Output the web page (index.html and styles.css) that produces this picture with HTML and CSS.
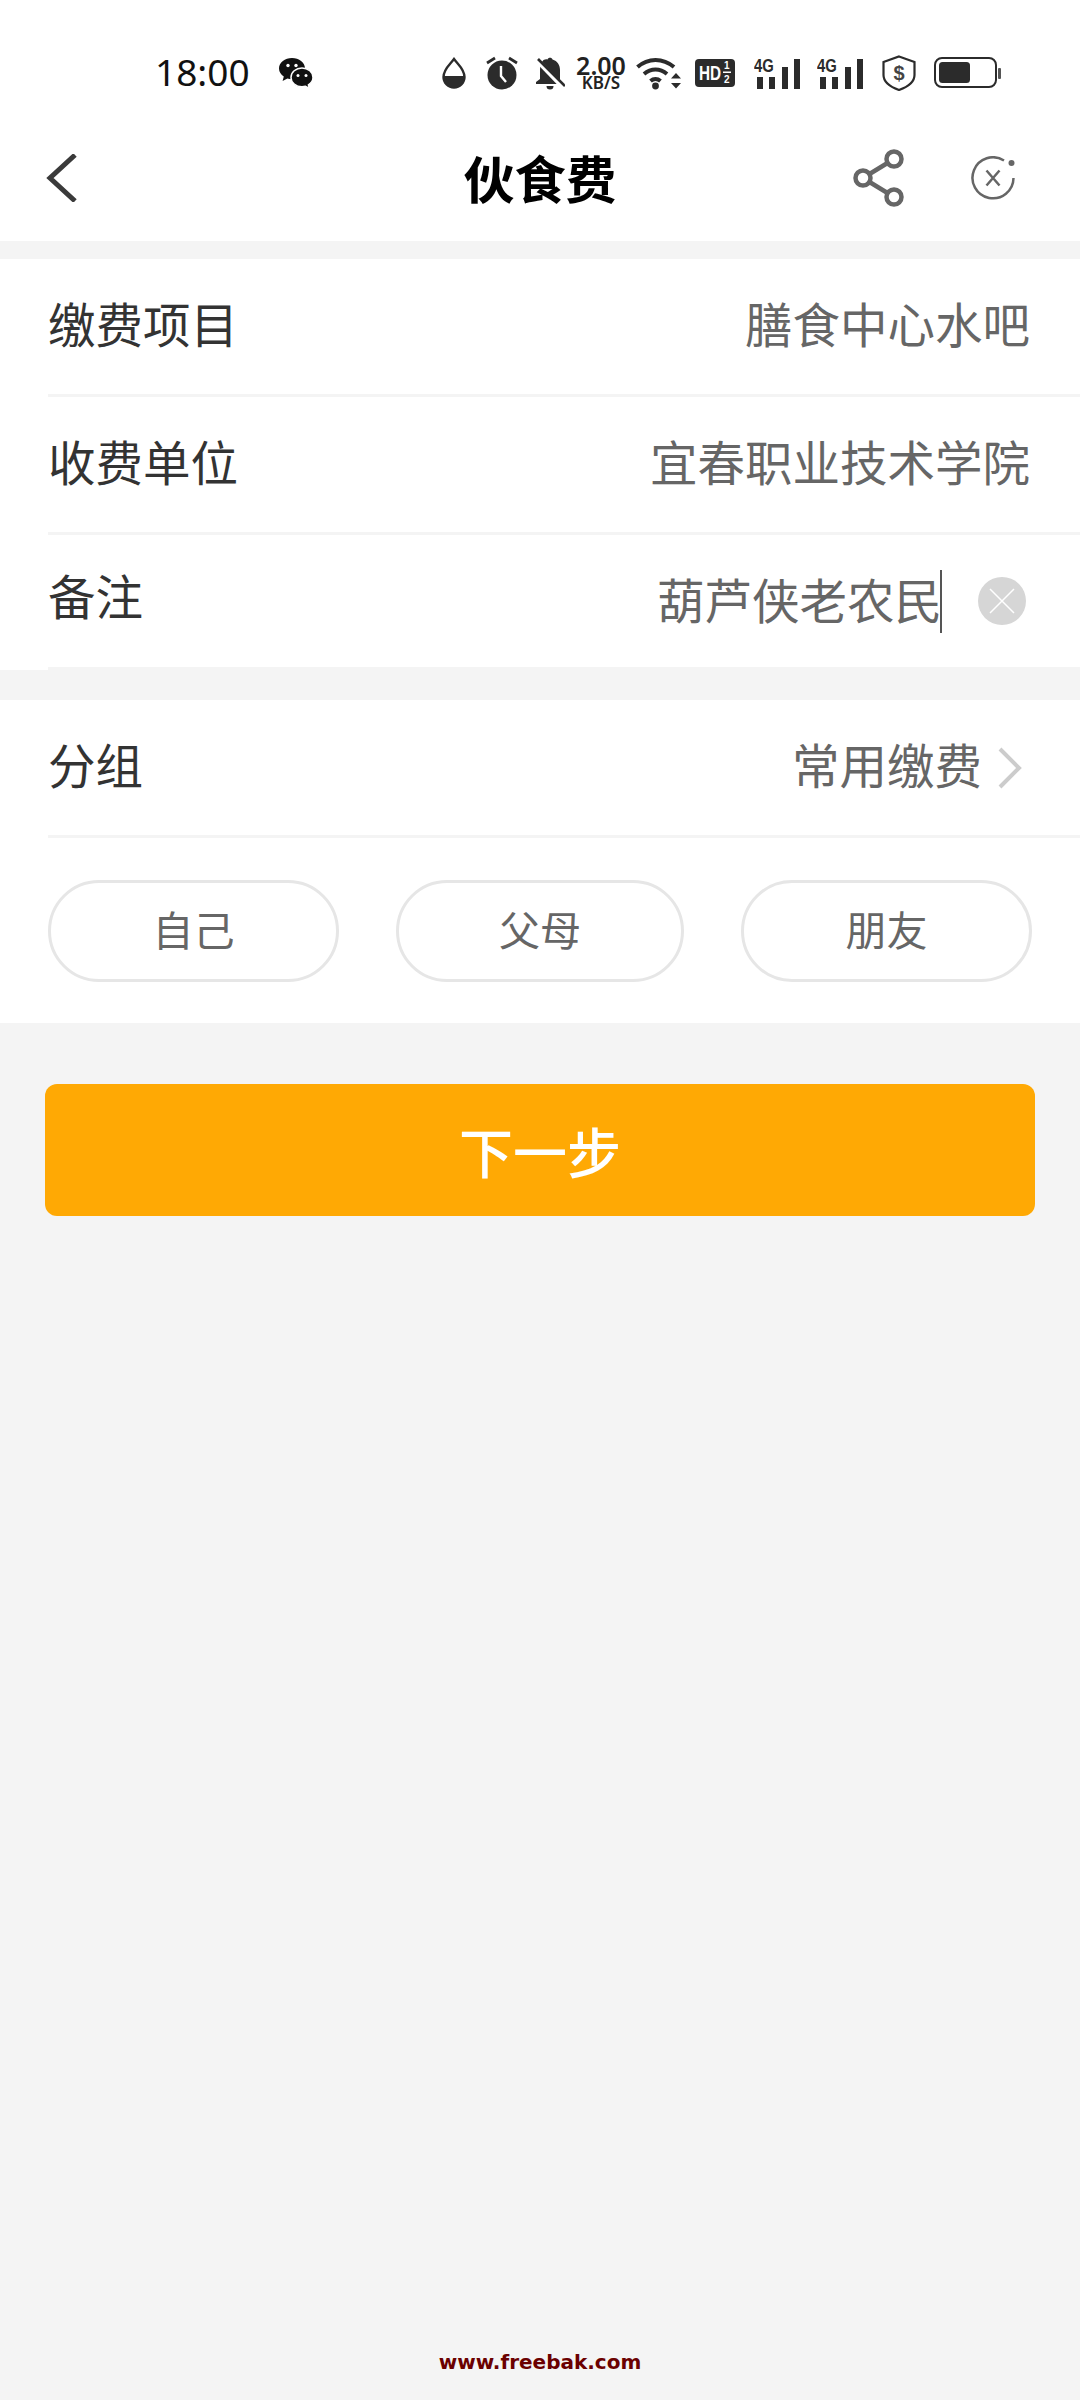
FILE: index.html
```html
<!DOCTYPE html>
<html lang="zh-CN">
<head>
    <meta charset="UTF-8">
    <meta name="viewport" content="width=device-width, initial-scale=1.0">
    <title>伙食费</title>
    <link rel="stylesheet" href="styles.css">
</head>
<body>
    <div class="page">
        <div class="status-bar">
            <span class="time">18:00</span>
            <svg class="ic-wechat" width="34" height="32" viewBox="0 0 34 32">
                <path d="M13 1C6 1 0 5.500 0 11.500c0 3.400 2 6.200 4.800 8.100L3.600 24l4.800-2.400c1.500.4 3 .6 4.600.6 7 0 13-4.800 13-10.700S20 1 13 1z" fill="#111"/>
                <circle cx="9" cy="8.500" r="1.700" fill="#fff"/>
                <circle cx="17" cy="8.500" r="1.700" fill="#fff"/>
                <path d="M23 11c-6.200 0-11 4.200-11 9.400s4.800 9.400 11 9.400c1.200 0 2.400-.2 3.500-.5l3.800 2-.9-3.500c2.800-1.700 4.600-4.400 4.600-7.400C34 15.200 29.200 11 23 11z" fill="#111" stroke="#fff" stroke-width="1.500"/>
                <circle cx="19" cy="18.500" r="1.500" fill="#fff"/>
                <circle cx="27" cy="18.500" r="1.500" fill="#fff"/>
            </svg>
            <div class="sys-icons">
                <svg class="ic-drop" width="24" height="32" viewBox="0 0 24 32">
                    <path d="M12 2C8 7.500 1.500 12 1.500 20a10.500 10.500 0 0 0 21 0C22.500 12 16 7.500 12 2z" fill="#fff" stroke="#2b2b2b" stroke-width="2.400"/>
                    <path d="M1.500 19h21v1.500a10.500 10.500 0 0 1-21 0z" fill="#2b2b2b"/>
                </svg>
                <svg class="ic-alarm" width="32" height="34" viewBox="0 0 32 34">
                    <circle cx="16" cy="19" r="14.500" fill="#2b2b2b"/>
                    <path d="M15 10v10l5 6" fill="none" stroke="#fff" stroke-width="2.400"/>
                    <path d="M1 7l8-5M31 7l-8-5" stroke="#2b2b2b" stroke-width="2.800"/>
                </svg>
                <svg class="ic-bell" width="30" height="34" viewBox="0 0 30 34">
                    <path d="M8.500 4C10 3.500 11 3 12.500 3.500 13 1 17 1 17.500 3.500 22.500 5 25 9 25 14v14H1v-2l4-3v-9c0-4 1-7.500 3.500-10z" fill="#2b2b2b"/>
                    <path d="M2 4l26 27" stroke="#fff" stroke-width="5"/>
                    <path d="M3 3l27 27" stroke="#2b2b2b" stroke-width="2.600"/>
                    <path d="M11.500 30h7a3.500 3.500 0 0 1-7 0z" fill="#2b2b2b"/>
                </svg>
                <div class="speed">
                    <span class="speed-num">2.00</span>
                    <span class="speed-unit">KB/S</span>
                </div>
                <svg class="ic-wifi" width="45" height="34" viewBox="0 0 45 34">
                    <path d="M1.500 11C12 1.500 27 1.500 38 11" fill="none" stroke="#2b2b2b" stroke-width="4"/>
                    <path d="M8 18c7-6 16-6 23 0" fill="none" stroke="#2b2b2b" stroke-width="4"/>
                    <path d="M14.500 25c3-2.600 7-2.600 10 0" fill="none" stroke="#2b2b2b" stroke-width="4"/>
                    <circle cx="19.500" cy="30" r="3.400" fill="#2b2b2b"/>
                    <path d="M35 22.500l5-5.500 5 5.500zM35 27h10l-5 5.500z" fill="#2b2b2b"/>
                </svg>
                <svg class="ic-hd" width="40" height="28" viewBox="0 0 40 28">
                    <rect width="40" height="28" rx="4" fill="#2b2b2b"/>
                    <text class="svg-hd" transform="translate(4 21) scale(.73 1)">HD</text>
                    <text class="svg-frac" x="29" y="10">1</text>
                    <rect x="28" y="12.500" width="8" height="1.500" fill="#fff"/>
                    <text class="svg-frac" x="29" y="24">2</text>
                </svg>
                <svg class="ic-net" width="47" height="38" viewBox="0 -6 47 38">
                    <text class="svg-4g" transform="translate(0 15) scale(.78 1)">4G</text>
                    <rect x="3" y="20" width="6" height="12" fill="#2b2b2b"/>
                    <rect x="15" y="20" width="6" height="12" fill="#2b2b2b"/>
                    <rect x="28" y="10" width="6" height="22" fill="#2b2b2b"/>
                    <rect x="40" y="2" width="6" height="30" fill="#2b2b2b"/>
                </svg>
                <svg class="ic-net ic-net2" width="47" height="38" viewBox="0 -6 47 38">
                    <text class="svg-4g" transform="translate(0 15) scale(.78 1)">4G</text>
                    <rect x="3" y="20" width="6" height="12" fill="#2b2b2b"/>
                    <rect x="15" y="20" width="6" height="12" fill="#2b2b2b"/>
                    <rect x="28" y="10" width="6" height="22" fill="#2b2b2b"/>
                    <rect x="40" y="2" width="6" height="30" fill="#2b2b2b"/>
                </svg>
                <svg class="ic-shield" width="34" height="36" viewBox="0 0 34 36">
                    <path d="M17 1.500L32.500 7v13c0 7-7 12-15.500 15C8.500 32 1.500 27 1.500 20V7z" fill="none" stroke="#2b2b2b" stroke-width="2.200"/>
                    <text class="svg-dollar" x="17" y="25">$</text>
                </svg>
                <svg class="ic-battery" width="67" height="32" viewBox="0 0 67 32">
                    <rect x="1" y="1" width="61" height="29" rx="7" fill="none" stroke="#2b2b2b" stroke-width="2"/>
                    <rect x="5" y="5" width="31" height="21" rx="3.500" fill="#2b2b2b"/>
                    <rect x="64" y="11" width="3" height="11" rx="1" fill="#555"/>
                </svg>
            </div>
        </div>

        <div class="nav-bar">
            <div class="nav-side">
                <svg width="32" height="48" viewBox="0 0 32 48">
                    <polyline points="29,1 4,24 29,47" class="chev-shape"/>
                </svg>
            </div>
            <h1 class="title">伙食费</h1>
            <div class="nav-side nav-right">
                <svg width="52" height="58" viewBox="0 0 52 58">
                    <circle cx="10" cy="29" r="7.500" fill="none" stroke="#666" stroke-width="4.500"/>
                    <circle cx="41" cy="10" r="7.500" fill="none" stroke="#666" stroke-width="4.500"/>
                    <circle cx="41" cy="48" r="7.500" fill="none" stroke="#666" stroke-width="4.500"/>
                    <path d="M16.500 25L34.500 14M16.500 33l18 11" stroke="#666" stroke-width="4.500"/>
                </svg>
                <svg width="45" height="44" viewBox="0 0 45 44">
                    <path d="M33 4.500A20.500 20.500 0 1 0 42.500 22" fill="none" stroke="#666" stroke-width="2.500"/>
                    <circle cx="40.500" cy="7" r="3" fill="#666"/>
                    <path d="M15.500 14.500l13 15M28.500 14.500l-13 15" stroke="#666" stroke-width="2.500"/>
                </svg>
            </div>
        </div>

        <div class="group group-first">
            <div class="row">
                <span class="label">缴费项目</span>
                <span class="value">膳食中心水吧</span>
            </div>
            <div class="row">
                <span class="label">收费单位</span>
                <span class="value">宜春职业技术学院</span>
            </div>
            <div class="row row-note">
                <span class="label">备注</span>
                <span class="value">葫芦侠老农民</span>
                <span class="caret"></span>
                <span class="clear">
                    <svg width="26" height="26" viewBox="0 0 26 26">
                        <path d="M1 1l24 24M25 1L1 25" stroke="#fff" stroke-width="1.500"/>
                    </svg>
                </span>
            </div>
        </div>

        <div class="group group-second">
            <div class="row">
                <span class="label">分组</span>
                <span class="value">常用缴费</span>
                <svg class="chevron" width="24" height="42" viewBox="0 0 24 42">
                    <path d="M2 2l19 19L2 40" fill="none" stroke="#ccc" stroke-width="4"/>
                </svg>
            </div>
            <div class="pills">
                <button class="pill">自己</button>
                <button class="pill">父母</button>
                <button class="pill">朋友</button>
            </div>
        </div>

        <button class="next-btn">下一步</button>

        <div class="watermark">www.freebak.com</div>
    </div>
</body>
</html>
```
FILE: styles.css
```css
* {
    box-sizing: border-box;
}
body {
    margin: 0;
    font-family: "Noto Sans CJK SC", "Noto Sans", sans-serif;
    background: #f4f4f4;
}
.page {
    display: flex;
    flex-direction: column;
    height: 2400px;
}
svg {
    display: block;
    flex: none;
}

/* status bar */
.status-bar {
    display: flex;
    align-items: center;
    height: 115px;
    padding: 30px 79px 0 155px;
    background: #ffffff;
}
.time {
    margin-bottom: 3px;
    font-family: "Noto Sans", sans-serif;
    font-size: 37px;
    color: #111;
}
.ic-wechat {
    margin-left: 29px;
}
.sys-icons {
    display: flex;
    align-items: center;
    margin-left: auto;
}
.ic-alarm {
    margin-left: 20px;
}
.ic-bell {
    margin-left: 17px;
}
.speed {
    display: flex;
    flex-direction: column;
    align-items: center;
    width: 50px;
    margin-left: 11px;
    color: #222;
    font-family: "Noto Sans", sans-serif;
    font-weight: 600;
}
.speed-num {
    font-size: 25px;
    line-height: 20px;
}
.speed-unit {
    font-size: 17px;
    line-height: 15px;
}
.ic-wifi {
    margin-left: 10px;
}
.ic-hd {
    margin-left: 14px;
}
.ic-net {
    margin-left: 19px;
    margin-bottom: 6px;
}
.ic-net2 {
    margin-left: 16px;
}
.ic-shield {
    margin-left: 18px;
}
.ic-battery {
    margin-left: 18px;
}
.svg-hd {
    font-family: "Liberation Sans", sans-serif;
    font-weight: 700;
    font-size: 21px;
    fill: #fff;
}
.svg-frac {
    font-family: "Liberation Sans", sans-serif;
    font-weight: 700;
    font-size: 10px;
    fill: #fff;
}
.svg-4g {
    font-family: "Liberation Sans", sans-serif;
    font-weight: 700;
    font-size: 19px;
    fill: #2b2b2b;
}
.svg-dollar {
    font-family: "Liberation Sans", sans-serif;
    font-weight: 700;
    font-size: 20px;
    text-anchor: middle;
    fill: #444;
}

/* nav */
.nav-bar {
    display: flex;
    align-items: center;
    height: 126px;
    padding: 0 64px 0 46px;
    background: #ffffff;
}
.nav-side {
    flex: 1;
    display: flex;
    align-items: center;
}
.nav-right {
    justify-content: flex-end;
    gap: 66px;
}
.chev-shape {
    fill: none;
    stroke: #3a3a3a;
    stroke-width: 5;
}
.title {
    margin: 0 0 3px 18px;
    font-size: 51px;
    font-weight: 700;
    color: #000;
}

/* rows */
.group {
    background: #ffffff;
}
.group-first {
    margin-top: 18px;
}
.group-second {
    margin-top: 30px;
    padding-bottom: 41px;
}
.row {
    display: flex;
    align-items: center;
    height: 138px;
    margin-left: 48px;
    padding-right: 50px;
    border-bottom: 3px solid #f4f4f4;
}
.row-note {
    height: 135px;
}
.label {
    margin-right: auto;
    margin-bottom: 8px;
    font-size: 47.5px;
    color: #333;
}
.value {
    margin-bottom: 8px;
    font-size: 47.5px;
    color: #666;
}
.row-note .label {
    margin-bottom: 14px;
}
.row-note .value {
    margin-bottom: 6px;
}
.caret {
    width: 2px;
    height: 63px;
    margin-left: -2px;
    background: #555;
}
.clear {
    display: flex;
    align-items: center;
    justify-content: center;
    width: 48px;
    height: 48px;
    margin: 0 4px 0 36px;
    border-radius: 50%;
    background: #d6d6d6;
}
.chevron {
    margin: 0 8px 0 16px;
}
.pills {
    display: grid;
    grid-template-columns: 291px 288px 291px;
    gap: 57px;
    margin-top: 42px;
    padding: 0 48px;
}
.pill {
    height: 102px;
    padding: 0 0 6px;
    border: 3px solid #e6e6e6;
    border-radius: 51px;
    background: #ffffff;
    font-family: inherit;
    font-size: 41px;
    color: #666;
}

/* button */
.next-btn {
    height: 132px;
    margin: 61px 45px 0;
    border: none;
    border-radius: 12px;
    background: #ffa904;
    font-family: inherit;
    font-size: 54px;
    font-weight: 500;
    color: #ffffff;
}
.watermark {
    margin-top: auto;
    padding-bottom: 26px;
    text-align: center;
    font-family: "DejaVu Sans", sans-serif;
    font-size: 20px;
    font-weight: 700;
    color: #6b0000;
}
```
